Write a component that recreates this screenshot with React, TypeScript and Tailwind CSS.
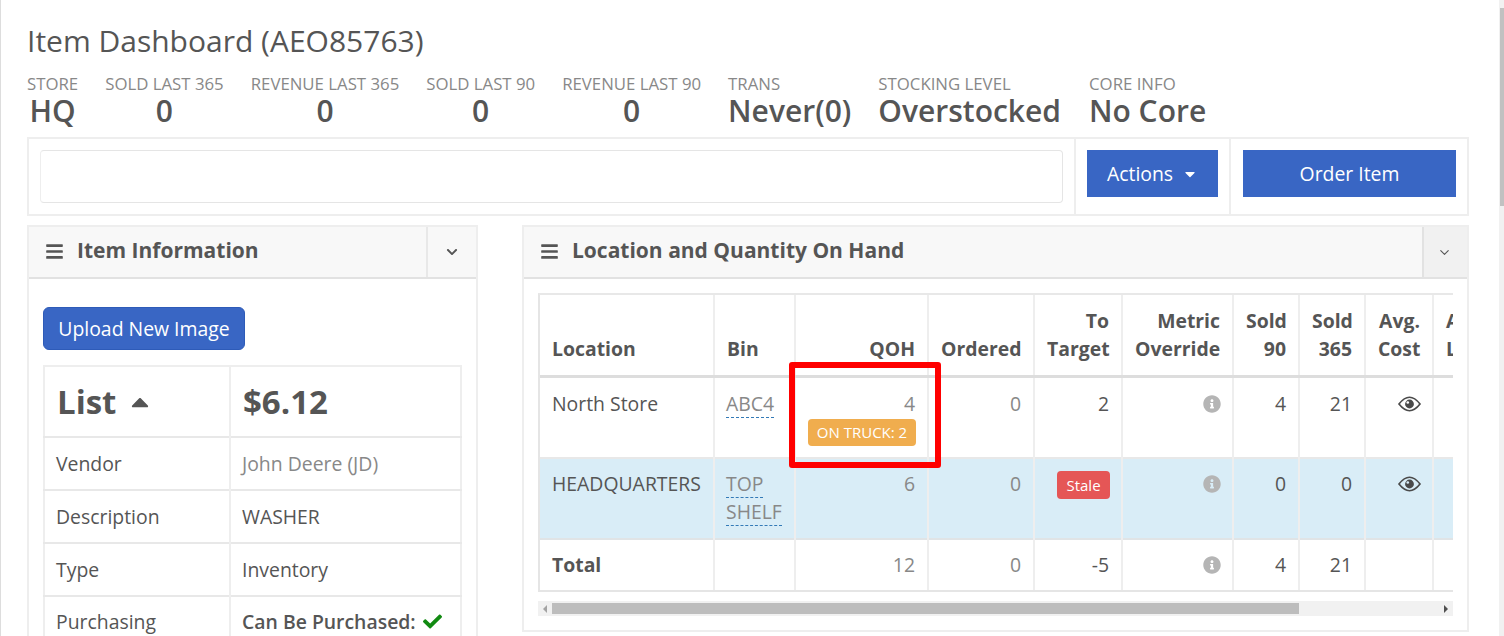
import { FaBars, FaCaretDown, FaCaretUp, FaCheck, FaChevronDown, FaInfoCircle } from "react-icons/fa";
import { ChevronDown } from "lucide-react";

const stats = [
  { label: "STORE", value: "HQ", center: true, extra: "" },
  { label: "SOLD LAST 365", value: "0", center: true, extra: "" },
  { label: "REVENUE LAST 365", value: "0", center: true, extra: "" },
  { label: "SOLD LAST 90", value: "0", center: true, extra: "" },
  { label: "REVENUE LAST 90", value: "0", center: true, extra: "" },
  { label: "TRANS", value: "Never(0)", center: false, extra: "" },
  { label: "STOCKING LEVEL", value: "Overstocked", center: false, extra: "" },
  { label: "CORE INFO", value: "No Core", center: false, extra: "ml-px" },
];

const infoRows = [
  { name: "Vendor", value: "John Deere (JD)", tone: "text-[#888888]" },
  { name: "Description", value: "WASHER", tone: "" },
  { name: "Type", value: "Inventory", tone: "" },
];

const widths = ["w-[174px]", "w-[81px]", "w-[133px]", "w-[106px]", "w-[88px]", "w-[111px]", "w-[66px]", "w-[66px]", "w-[68px]", "w-[60px]"];

const cell = "border-r-2 border-[#eeeeee] px-3 align-top";
const head = "border-r-2 border-[#eeeeee] px-3 pb-[12px] align-bottom";

const InfoIcon = () => <FaInfoCircle className="-mr-px ml-auto mt-[5px] text-[18px] text-[#b5b5b5]" />;

const EyeIcon = ({ glint }: { glint: string }) => (
  <svg viewBox="0 0 24 16" className="-mr-px ml-auto mt-[6px] h-[16px] w-[23px] text-[#4a4a4a]">
    <path d="M1 8C5 3 9 1 12 1s7 2 11 7c-4 5-8 7-11 7s-7-2-11-7Z" fill="none" stroke="currentColor" strokeWidth="1.7" />
    <circle cx="12" cy="8" r="4.6" fill="currentColor" />
    <circle cx="10.2" cy="6.4" r="1.4" fill={glint} />
  </svg>
);

const Bin = ({ children }: { children: string }) => (
  <span className="-ml-px border-b border-dashed border-[#337ab7] text-[#888888]">{children}</span>
);

const PanelHeader = ({ title }: { title: string }) => (
  <div className="flex h-[50px] items-center gap-[13px] pb-[2px] pl-[16px]">
    <FaBars className="text-[19px] text-[#555555]" />
    <h2 className="text-[21px] font-bold text-[#555555]">{title}</h2>
  </div>
);

export default function App() {
  return (
    <div className="relative flex h-[636px] w-[1504px] overflow-hidden bg-white font-['Open_Sans',sans-serif] text-[19.4px] text-[#555555]">
      <div className="flex w-[1499px] flex-col border-l border-[#dddddd] pl-[26px]">
        <h1 className="mt-[22px] h-[38px] shrink-0 text-[30px] leading-[38px] text-[#555555]">Item Dashboard (AEO85763)</h1>

        <div className="mt-[14px] flex h-[63px] shrink-0 gap-[27px]">
          {stats.map((s) => (
            <div key={s.label} className={`${s.center ? "text-center" : "text-left"} ${s.extra}`}>
              <div className="h-[20px] text-[16.8px] leading-[20px] text-[#888888]">{s.label}</div>
              <div className="text-[30px] leading-[34px] font-semibold text-[#555555]">{s.value}</div>
            </div>
          ))}
        </div>

        <div className="flex h-[79px] w-[1442px] shrink-0 border-2 border-[#eeeeee]">
          <div className="flex-1 py-[11px] pl-[11px] pr-[11px]">
            <div className="h-[53px] rounded border border-[#e5e5e5] border-l-[#eeeeee]" />
          </div>
          <div className="flex w-[155px] border-l-2 border-[#eeeeee] pl-[11px] pt-[11px]">
            <button className="flex h-[47px] w-[131px] items-center justify-center gap-[9px] bg-[#3966c4] text-white">
              Actions <FaCaretDown className="text-[16px]" />
            </button>
          </div>
          <div className="w-[238px] border-l-2 border-[#eeeeee] pl-[12px] pt-[11px]">
            <button className="h-[47px] w-[213px] bg-[#3966c4] text-white">Order Item</button>
          </div>
        </div>

        <div className="mt-[9px] flex shrink-0 items-start">
          <section className="h-[420px] w-[451px] border-2 border-[#eeeeee]">
            <div className="flex border-b-2 border-[#e2e2e2] bg-[#f8f8f8]">
              <div className="flex-1"><PanelHeader title="Item Information" /></div>
              <div className="flex w-[50px] items-center justify-center border-l-2 border-[#e8e8e8]">
                <FaChevronDown className="text-[12px] text-[#555555]" />
              </div>
            </div>
            <div className="px-[14px] pt-[28px]">
              <button className="h-[43px] w-[202px] rounded-[6px] border border-[#2e5bb8] bg-[#3966c4] text-white">Upload New Image</button>
              <table className="mt-[15px] w-[419px] table-fixed border-2 border-[#eeeeee]">
                <tbody>
                  <tr className="h-[71px] border-b-2 border-[#e8e8e8] text-[33px] font-bold">
                    <td className="w-[186px] border-r-2 border-[#eeeeee] pl-[12px]">
                      <span className="flex items-center gap-[10px]">List <FaCaretUp className="text-[28px]" /></span>
                    </td>
                    <td className="pl-[12px]">$6.12</td>
                  </tr>
                  {infoRows.map((r) => (
                    <tr key={r.name} className="h-[53px] border-b-2 border-[#e8e8e8]">
                      <td className="border-r-2 border-[#eeeeee] pl-[11px]">{r.name}</td>
                      <td className={`pl-[11px] ${r.tone}`}>{r.value}</td>
                    </tr>
                  ))}
                  <tr className="h-[52px]">
                    <td className="border-r-2 border-[#eeeeee] pl-[11px]">Purchasing</td>
                    <td className="pl-[11px] font-semibold">
                      <span className="flex items-center gap-[7px]">Can Be Purchased: <FaCheck className="text-[19px] text-[#118a11]" /></span>
                    </td>
                  </tr>
                </tbody>
              </table>
            </div>
          </section>

          <section className="ml-[44px] h-[407px] w-[947px] border-2 border-[#eeeeee]">
            <div className="flex border-b-2 border-[#e2e2e2] bg-[#f8f8f8]">
              <div className="flex-1"><PanelHeader title="Location and Quantity On Hand" /></div>
              <div className="flex w-[45px] items-center justify-center border-l-2 border-[#e2e2e2] bg-[#f1f1f1] pr-[3px]">
                <ChevronDown className="h-[15px] w-[15px] text-[#555555]" strokeWidth={1.75} />
              </div>
            </div>
            <div className="px-[14px] pt-[14px]">
              <div className="w-[915px] overflow-hidden border-y-2 border-l-2 border-[#e5e5e5] border-t-[#e8e8e8]">
                <table className="w-[920px] table-fixed leading-[28px]">
                  <colgroup>
                    {widths.map((w, i) => <col key={i} className={w} />)}
                  </colgroup>
                  <thead>
                    <tr className="h-[81px] border-b-[3px] border-[#dddddd] font-bold">
                      <th className={`${head} text-left`}>Location</th>
                      <th className={`${head} text-left`}>Bin</th>
                      <th className={`${head} text-right`}>QOH</th>
                      <th className={`${head} text-right`}>Ordered</th>
                      <th className={`${head} text-right`}>To<br />Target</th>
                      <th className={`${head} text-right`}>Metric<br />Override</th>
                      <th className={`${head} text-right`}>Sold<br />90</th>
                      <th className={`${head} text-right`}>Sold<br />365</th>
                      <th className={`${head} text-right`}>Avg.<br />Cost</th>
                      <th className="pb-[12px] pl-[12px] align-bottom text-left whitespace-nowrap">Avg.<br />Last</th>
                    </tr>
                  </thead>
                  <tbody className="text-[#888888]">
                    <tr className="h-[82px] border-b-2 border-[#e8e8e8]">
                      <td className={`${cell} pt-[12px] text-[#555555]`}>North Store</td>
                      <td className={`${cell} pt-[12px]`}><Bin>ABC4</Bin></td>
                      <td className={`${cell} pt-[12px] text-right`}>
                        4
                        <div className="ml-auto mt-px h-[27px] w-[108px] rounded-[4px] bg-[#f0ad4e] text-center text-[15px] leading-[27px] text-white">ON TRUCK: 2</div>
                      </td>
                      <td className={`${cell} pt-[12px] text-right`}>0</td>
                      <td className={`${cell} pt-[12px] text-right text-[#555555]`}>2</td>
                      <td className={`${cell} pt-[12px]`}><InfoIcon /></td>
                      <td className={`${cell} pt-[12px] text-right text-[#555555]`}>4</td>
                      <td className={`${cell} pt-[12px] text-right text-[#555555]`}>21</td>
                      <td className={`${cell} pt-[12px]`}><EyeIcon glint="#ffffff" /></td>
                      <td />
                    </tr>
                    <tr className="h-[81px] border-b-2 border-[#e0e4e6] bg-[#d9edf7]">
                      <td className={`${cell} pt-[11px] text-[#555555]`}>HEADQUARTERS</td>
                      <td className={`${cell} pt-[11px]`}><Bin>TOP</Bin><br /><Bin>SHELF</Bin></td>
                      <td className={`${cell} pt-[11px] text-right`}>6</td>
                      <td className={`${cell} pt-[11px] text-right`}>0</td>
                      <td className={`${cell} pt-[12px]`}>
                        <div className="-mr-px ml-auto h-[28px] w-[53px] rounded-[4px] bg-[#e55656] text-center text-[15px] leading-[28px] text-white">Stale</div>
                      </td>
                      <td className={`${cell} pt-[11px]`}><InfoIcon /></td>
                      <td className={`${cell} pt-[11px] text-right text-[#555555]`}>0</td>
                      <td className={`${cell} pt-[11px] text-right text-[#555555]`}>0</td>
                      <td className={`${cell} pt-[11px]`}><EyeIcon glint="#d9edf7" /></td>
                      <td />
                    </tr>
                    <tr className="h-[51px]">
                      <td className={`${cell} pt-[11px] font-bold text-[#555555]`}>Total</td>
                      <td className={cell} />
                      <td className={`${cell} pt-[11px] text-right`}>12</td>
                      <td className={`${cell} pt-[11px] text-right`}>0</td>
                      <td className={`${cell} pt-[11px] text-right text-[#555555]`}>-5</td>
                      <td className={`${cell} pt-[11px]`}><InfoIcon /></td>
                      <td className={`${cell} pt-[11px] text-right text-[#555555]`}>4</td>
                      <td className={`${cell} pt-[11px] text-right text-[#555555]`}>21</td>
                      <td className={cell} />
                      <td />
                    </tr>
                  </tbody>
                </table>
              </div>
              <div className="mt-[9px] flex h-[15px] w-[915px] items-center bg-[#f1f1f1]">
                <div className="flex w-[14px] justify-center"><div className="h-0 w-0 border-y-[4px] border-r-[4px] border-y-transparent border-r-[#a3a3a3]" /></div>
                <div className="h-[11px] w-[747px] bg-[#bdbdbd]" />
                <div className="ml-auto flex w-[14px] justify-center"><div className="h-0 w-0 border-y-[4px] border-l-[4px] border-y-transparent border-l-[#505050]" /></div>
              </div>
            </div>
          </section>
        </div>
      </div>

      <div className="w-[5px] bg-[#f1f1f1] pl-px pt-[8px]">
        <div className="h-[198px] bg-[#c1c1c1]" />
      </div>

      {/* red callout drawn on top of the QOH cell */}
      <div className="absolute left-[789px] top-[362px] h-[106px] w-[152px] rounded-[3px] border-[6px] border-[#ff0000]" />
    </div>
  );
}
